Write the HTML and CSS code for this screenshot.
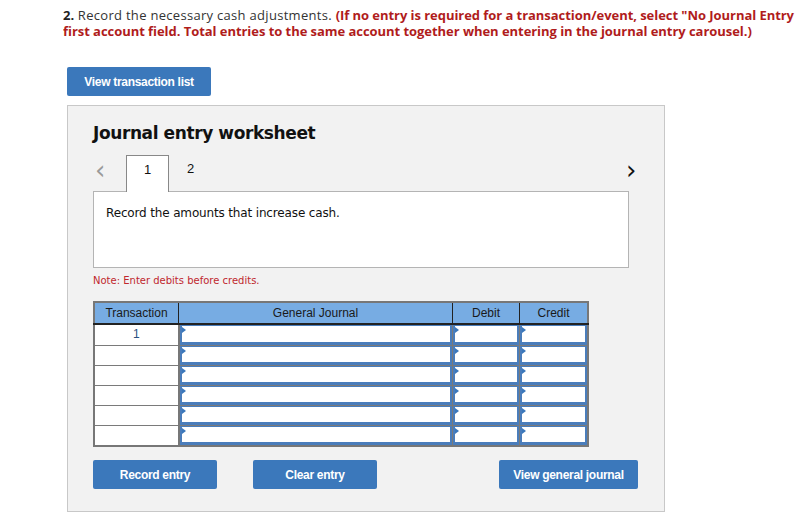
FILE: index.html
```html
<!DOCTYPE html>
<html>
<head>
<meta charset="utf-8">
<link rel="stylesheet" href="styles.css">
</head>
<body>
<p class="question"><span class="line"><b class="num">2.</b><span class="reg"> Record the necessary cash adjustments. </span><span class="red">(If no entry is required for a transaction/event, select "No Journal Entry Required" in the</span></span><br><span class="line red">first account field. Total entries to the same account together when entering in the journal entry carousel.)</span></p>

<button class="btn btn-list">View transaction list</button>

<div class="panel">
  <h2 class="title">Journal entry worksheet</h2>
  <div class="tabs">
    <span class="chev chev-left">&#x2039;</span>
    <span class="tab active">1</span>
    <span class="tab">2</span>
    <span class="spacer"></span>
    <span class="chev chev-right">&#x203A;</span>
  </div>
  <div class="content">Record the amounts that increase cash.</div>
  <p class="note">Note: Enter debits before credits.</p>

  <table class="journal">
    <thead>
      <tr><th class="c-tr">Transaction</th><th class="c-gj">General Journal</th><th class="c-dr">Debit</th><th class="c-cr">Credit</th></tr>
    </thead>
    <tbody>
      <tr class="first"><td class="tr">1</td><td><div class="inp"></div></td><td><div class="inp"></div></td><td><div class="inp"></div></td></tr>
      <tr><td class="tr"></td><td><div class="inp"></div></td><td><div class="inp"></div></td><td><div class="inp"></div></td></tr>
      <tr><td class="tr"></td><td><div class="inp"></div></td><td><div class="inp"></div></td><td><div class="inp"></div></td></tr>
      <tr><td class="tr"></td><td><div class="inp"></div></td><td><div class="inp"></div></td><td><div class="inp"></div></td></tr>
      <tr><td class="tr"></td><td><div class="inp"></div></td><td><div class="inp"></div></td><td><div class="inp"></div></td></tr>
      <tr><td class="tr"></td><td><div class="inp"></div></td><td><div class="inp"></div></td><td><div class="inp"></div></td></tr>
    </tbody>
  </table>

  <div class="actions">
    <button class="btn btn-record">Record entry</button>
    <button class="btn btn-clear">Clear entry</button>
    <span class="spacer"></span>
    <button class="btn btn-view">View general journal</button>
  </div>
</div>
</body>
</html>
```
FILE: styles.css
```css
html, body {
  margin: 0;
  padding: 0;
  background: #ffffff;
  width: 796px;
  overflow: hidden;
}
body {
  font-family: "Open Sans", "Liberation Sans", sans-serif;
  color: #222;
}
.question {
  margin: 7px 0 0 63px;
  width: 733px;
  font-size: 13px;
  line-height: 16px;
  color: #333;
  overflow: hidden;
}
.question .line { white-space: nowrap; }
.question .num { font-weight: 700; color: #222; }
.question .reg { letter-spacing: 0.3px; }
.question .red { color: #b01c1c; font-weight: 700; letter-spacing: -0.05px; }

.btn {
  display: inline-flex;
  align-items: center;
  justify-content: center;
  background: #3b78bb;
  color: #fff;
  border: none;
  border-radius: 2px;
  font-family: "Liberation Sans", Arial, sans-serif;
  font-weight: 700;
  font-size: 12px;
  letter-spacing: -0.3px;
  height: 29px;
  padding: 0;
  cursor: pointer;
}
.btn-list {
  display: flex;
  margin: 28px 0 0 67px;
  width: 144px;
}
.panel {
  margin: 9px 0 0 67px;
  height: 405px;
  background: #f2f2f2;
  border: 1px solid #c8c8c8;
  padding: 0 0 0 25px;
  box-sizing: content-box;
  width: 571px;
}
.title {
  margin: 16px 0 0 0;
  font-family: "DejaVu Sans", Verdana, sans-serif;
  font-size: 17px;
  font-weight: 700;
  line-height: 22px;
  color: #111;
  letter-spacing: -0.4px;
}
.tabs {
  display: flex;
  align-items: stretch;
  margin-top: 11px;
  height: 36px;
  width: 545px;
  font-family: "Liberation Sans", Arial, sans-serif;
  font-size: 13px;
}
.chev {
  font-size: 26px;
  line-height: 30px;
  font-family: "DejaVu Sans", sans-serif;
}
.chev-left { color: #9a9a9a; width: 31px; text-align: left; padding-left: 2px; }
.chev-right { color: #111; width: 12px; }
.tab {
  width: 43px;
  display: flex;
  justify-content: center;
  padding-top: 6px;
  color: #111;
}
.tab.active {
  background: #fff;
  border: 1px solid #888;
  border-bottom: none;
  position: relative;
  z-index: 1;
  box-sizing: border-box;
  margin-bottom: -1px;
  height: 37px;
}
.spacer { flex: 1; }
.content {
  background: #fff;
  border: 1px solid #b4b4b4;
  font-family: "DejaVu Sans", Verdana, sans-serif;
  font-size: 12px;
  letter-spacing: -0.15px;
  color: #111;
  padding: 14px 0 0 12px;
  box-sizing: border-box;
  width: 536px;
  height: 77px;
}
.note {
  margin: 7px 0 0 0;
  font-family: "DejaVu Sans", Verdana, sans-serif;
  font-size: 10px;
  line-height: 12px;
  color: #c0272d;
}
.journal {
  margin-top: 14px;
  border-collapse: collapse;
  table-layout: fixed;
  border: 2px solid #777;
  font-family: "Liberation Sans", Arial, sans-serif;
  font-size: 12px;
}
.journal th {
  background: #77ace3;
  color: #1a1a1a;
  font-weight: 400;
  height: 20px;
  padding: 0;
  border-left: 1px solid #222;
  border-bottom: 2px solid #222;
}
.journal th:first-child { border-left: none; }
.c-tr { width: 83px; }
.c-gj { width: 273px; }
.c-dr { width: 66px; }
.c-cr { width: 67px; }
.journal td {
  height: 19px;
  padding: 0;
  background: #fff;
  border: 1px solid #7a7a7a;
  vertical-align: top;
}
.journal tr.first td { height: 20px; }
.journal tr.first .inp { height: 16px; }
.journal td.tr {
  text-align: center;
  line-height: 19px;
  border-right: 2px solid #777;
  color: #2a4f80;
}
.inp {
  position: relative;
  height: 15px;
  border: 2px solid #4a7dbb;
  border-top-width: 1px;
  border-bottom-width: 3px;
  background: #fff;
}
.inp::before {
  content: "";
  position: absolute;
  left: 0;
  top: 1px;
  border-top: 3px solid transparent;
  border-bottom: 3px solid transparent;
  border-left: 4px solid #3b78bb;
}
.actions {
  display: flex;
  margin-top: 13px;
  width: 545px;
  gap: 36px;
}
.actions .spacer { flex: 1; }
.btn-record { width: 124px; }
.btn-clear { width: 124px; }
.btn-view { width: 139px; }
```
